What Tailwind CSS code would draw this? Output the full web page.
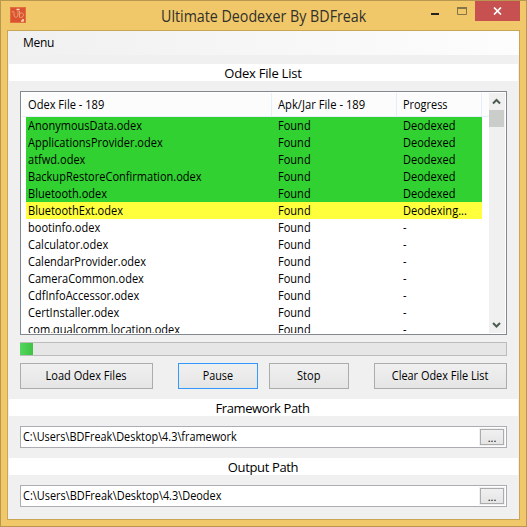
<!DOCTYPE html>
<html lang="en">
<head>
<meta charset="utf-8">
<title>Ultimate Deodexer By BDFreak</title>
<script src="https://cdn.jsdelivr.net/npm/@tailwindcss/browser@4"></script>
</head>
<body class="font-['Open_Sans','Noto_Sans',sans-serif] text-black text-[12px]">
<div class="w-[527px] h-[527px] overflow-hidden flex flex-col bg-[#f0c869] border border-[#b8984f] px-[6px] pb-[6px]">
  <header class="h-[29px] shrink-0 flex items-start relative">
    <svg class="ml-[3px] mt-[6px] shrink-0" width="16" height="16" viewBox="0 0 16 16" fill="none">
      <rect width="16" height="16" fill="#dc5330"/>
      <rect x=".5" y=".5" width="15" height="15" stroke="#e0703f"/>
      <path d="M2 5.500c0-1.500 2-1.500 2 0v2.500c0 3 4 3 4 0V4M9.500 4v6.500M9.500 7c1-1.500 4-1.500 4 1s-3 3-4 2" stroke="#e8a070" stroke-width="1"/>
      <path d="M6.500 2.500h3" stroke="#f6e3c0" stroke-width="1.500"/>
      <path d="M11 14h2v-2" stroke="#f3d9b0" stroke-width="1.700"/>
    </svg>
    <h1 class="w-[206px] ml-[135px] mt-[4px] text-[16px] leading-[22px] whitespace-nowrap text-[#30302c] origin-left scale-x-[0.89]">Ultimate Deodexer By BDFreak</h1>
    <svg class="ml-[64px] mt-[5px]" width="38" height="12" viewBox="0 0 38 12" fill="none">
      <path d="M0 8h8" stroke="#222" stroke-width="2"/>
      <path d="M26.500 1.500h9v7h-9z" stroke="#85744a"/><path d="M26 2h10" stroke="#85744a" stroke-width="2"/>
    </svg>
    <div class="absolute right-0 top-0 w-[45px] h-[20px] bg-[#c75050] flex items-center justify-center">
      <svg width="9" height="8" viewBox="0 0 9 8"><path d="M1 .5l7 7M8 .5l-7 7" stroke="#fff" stroke-width="1.700"/></svg>
    </div>
  </header>
  <main class="flex-1 min-h-0 bg-[#f0f0f0] border border-[#c9a554] flex flex-col">
    <nav class="h-[24px] shrink-0 bg-linear-to-r from-[#f0f0f0] to-[#fdfdfd] pl-[15px] leading-[24px] tracking-[-0.3px]">Menu</nav>
    <h2 class="mt-[9px] mx-px h-[17px] leading-[19px] bg-white text-center text-[13px] tracking-[-0.22px] pr-px shrink-0">Odex File List</h2>
    <section class="mt-[10px] ml-[12px] w-[487px] h-[244px] shrink-0 border border-[#828790] bg-white p-px flex overflow-hidden">
      <div class="w-[467px] h-full overflow-hidden flex flex-col whitespace-nowrap">
        <div class="h-[24px] shrink-0 flex bg-[#fcfcfc] border-b border-[#e5eefb] leading-[24px]">
          <div class="w-[250px] pl-[6px] border-r border-[#e5eefb]"><span class="inline-block origin-left scale-x-[0.925]">Odex File - 189</span></div>
          <div class="w-[125px] pl-[6px] border-r border-[#e5eefb]"><span class="inline-block origin-left scale-x-[0.935]">Apk/Jar File - 189</span></div>
          <div class="w-[85px] pl-[6px] border-r border-[#e5eefb]"><span class="inline-block origin-left scale-x-[0.91]">Progress</span></div>
        </div>
        <div id="rows" class="ml-[4px] w-[456px]"></div>
      </div>
      <div class="w-[16px] bg-[#f0f0f0] flex flex-col items-start">
        <svg class="h-[17px] ml-[3px] shrink-0" width="9" height="17" viewBox="0 0 9 17" fill="none"><path d="M1 10.500l3.500-3.500 3.500 3.500" stroke="#4c5c50" stroke-width="2"/></svg>
        <div class="w-[15px] h-[17px] bg-[#cbcdcb]"></div>
        <svg class="mt-auto ml-[3px] shrink-0" width="9" height="17" viewBox="0 0 9 17" fill="none"><path d="M1 7l3.500 3.500L8 7" stroke="#4c5c50" stroke-width="2"/></svg>
      </div>
    </section>
    <div class="mt-[7px] ml-[12px] w-[487px] h-[14px] shrink-0 bg-[#e6e6e6] border border-[#bcbcbc]">
      <div class="-ml-px w-[13px] h-[12px] bg-linear-to-r from-[#55d65c] to-[#3cc344]"></div>
    </div>
    <div class="mt-[7px] ml-[12px] w-[487px] h-[26px] shrink-0 flex whitespace-nowrap">
      <button class="w-[133px] border border-[#acacac] bg-linear-to-b from-[#f0f0f0] to-[#e5e5e5]"><span class="inline-block scale-x-[0.92]">Load Odex Files</span></button>
      <button class="ml-[25px] w-[80px] border border-[#3399ff] bg-linear-to-b from-[#f0f0f0] to-[#e5e5e5]"><span class="inline-block scale-x-[0.9]">Pause</span></button>
      <button class="ml-[11px] w-[80px] border border-[#acacac] bg-linear-to-b from-[#f0f0f0] to-[#e5e5e5]"><span class="inline-block scale-x-[0.92]">Stop</span></button>
      <button class="ml-[25px] w-[133px] border border-[#acacac] bg-linear-to-b from-[#f0f0f0] to-[#e5e5e5]"><span class="inline-block scale-x-[0.91]">Clear Odex File List</span></button>
    </div>
    <h2 class="mt-[10px] mx-px h-[17px] leading-[19px] bg-white text-center text-[13px] tracking-[-0.4px] pr-[2px] shrink-0">Framework Path</h2>
    <div class="mt-[10px] ml-[12px] w-[487px] h-[22px] shrink-0 bg-white border border-[#abadb3] flex justify-between pl-[2px] pr-px py-px">
      <span class="leading-[17px] origin-left scale-x-[0.905]">C:\Users\BDFreak\Desktop\4.3\framework</span>
      <button class="w-[26px] h-[18px] border border-[#f0f0f0]"><span class="block h-[16px] border border-[#acacac] bg-linear-to-b from-[#f0f0f0] to-[#e5e5e5] leading-[15px] text-[11px]">...</span></button>
    </div>
    <h2 class="mt-[10px] mx-px h-[17px] leading-[19px] bg-white text-center text-[13px] tracking-[-0.35px] pr-px shrink-0">Output Path</h2>
    <div class="mt-[10px] ml-[12px] w-[487px] h-[22px] shrink-0 bg-white border border-[#abadb3] flex justify-between pl-[2px] pr-px py-px">
      <span class="leading-[17px] origin-left scale-x-[0.91]">C:\Users\BDFreak\Desktop\4.3\Deodex</span>
      <button class="w-[26px] h-[18px] border border-[#f0f0f0]"><span class="block h-[16px] border border-[#acacac] bg-linear-to-b from-[#f0f0f0] to-[#e5e5e5] leading-[15px] text-[11px]">...</span></button>
    </div>
  </main>
</div>
<script>
const files = ['AnonymousData', 'ApplicationsProvider', 'atfwd', 'BackupRestoreConfirmation', 'Bluetooth', 'BluetoothExt', 'bootinfo', 'Calculator', 'CalendarProvider', 'CameraCommon', 'CdfInfoAccessor', 'CertInstaller', 'com.qualcomm.location'];
const cell = (text) => `<span class="inline-block origin-left scale-x-[0.92]">${text}</span>`;
document.getElementById('rows').innerHTML = files.map((name, i) => {
  const bg = i < 5 ? 'bg-[#30d130]' : i === 5 ? 'bg-[#ffff3c]' : 'bg-white';
  const state = i < 5 ? 'Deodexed' : i === 5 ? 'Deodexing...' : '-';
  return `<div class="flex h-[17px] leading-[18px] ${bg}"><div class="w-[250px] pl-[2px]">${cell(name + '.odex')}</div><div class="w-[125px] pl-[2px]">${cell('Found')}</div><div class="pl-[2px]">${cell(state)}</div></div>`;
}).join('');
</script>
</body>
</html>
